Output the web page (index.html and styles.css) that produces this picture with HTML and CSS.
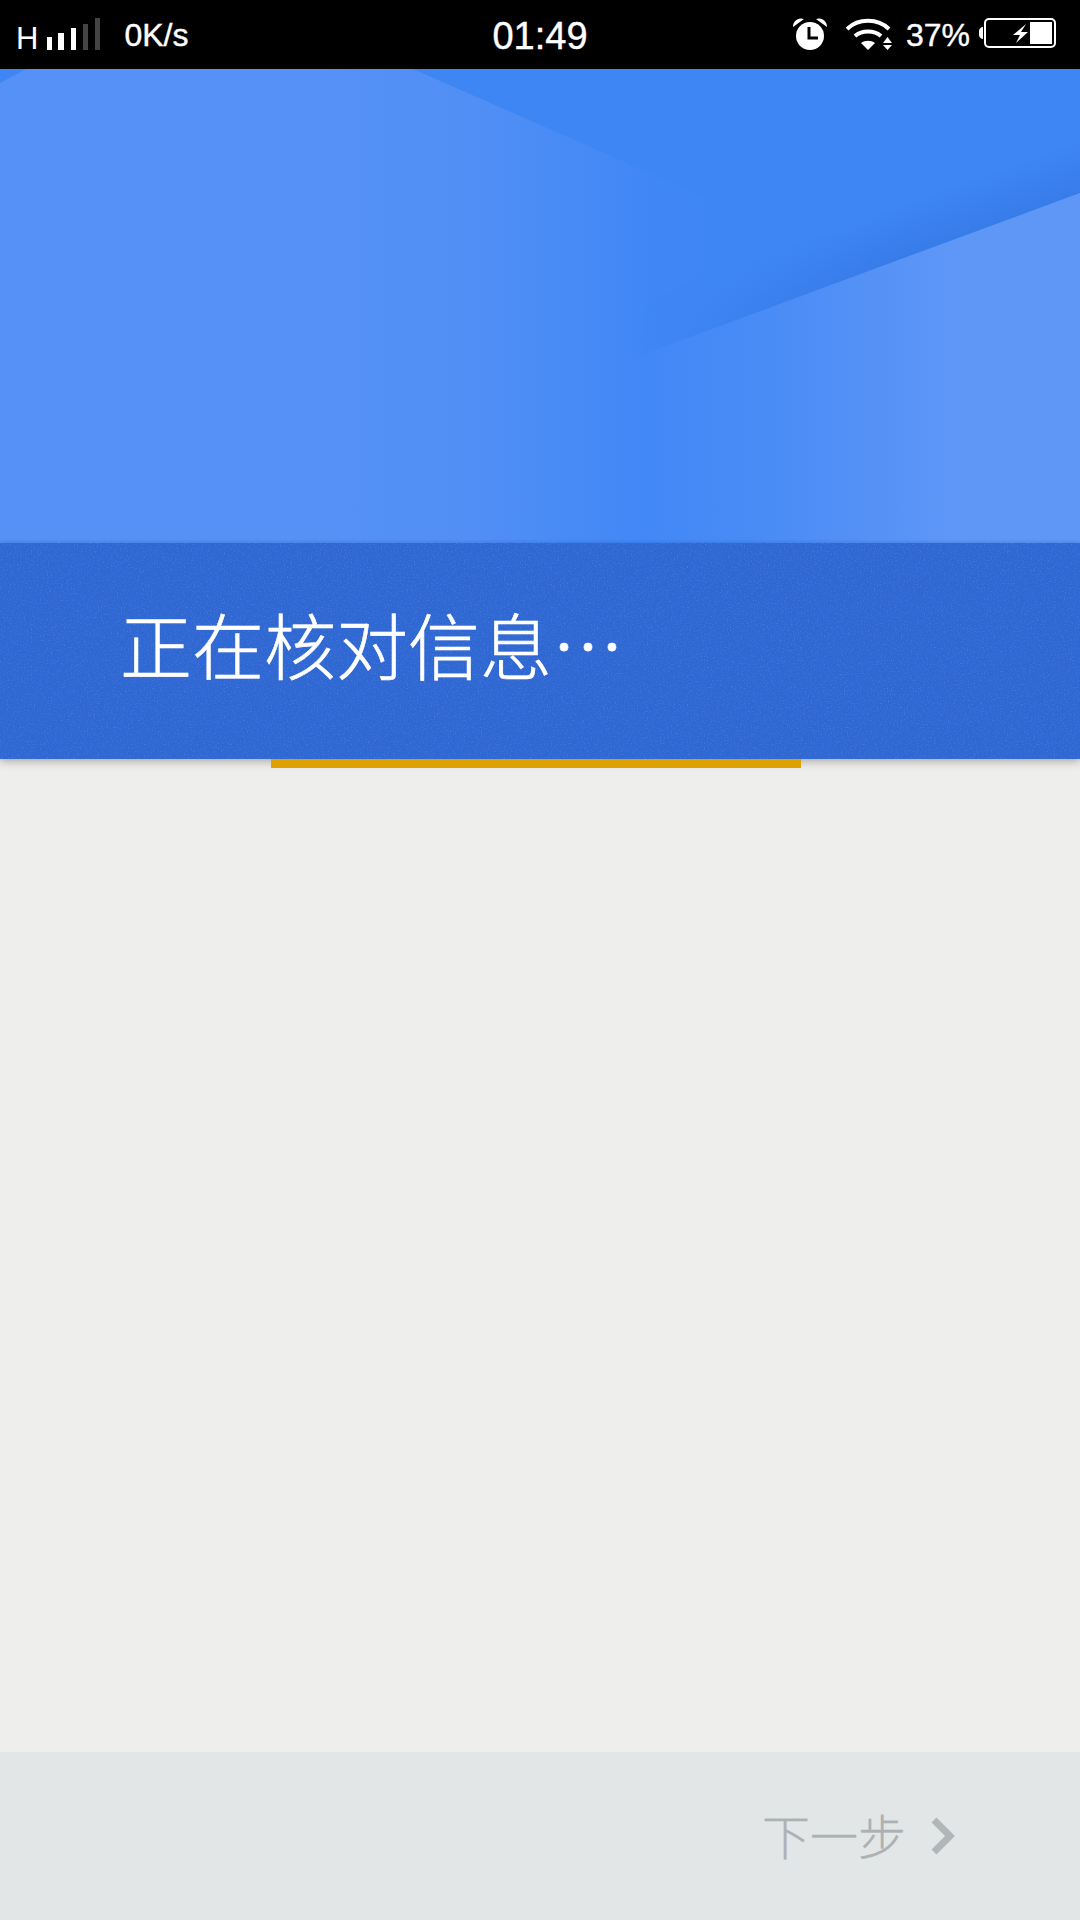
FILE: index.html
```html
<!DOCTYPE html>
<html lang="zh-CN">
  <head>
    <meta charset="utf-8">
    <meta name="viewport" content="width=device-width, initial-scale=1">
    <title>正在核对信息</title>
    <link rel="stylesheet" href="styles.css">
  </head>

  <body>
    <div class="app">
      <div class="status">
        <div class="status__left">
          <span class="status__net">H</span>
          <svg class="status__signal" width="54" height="32" viewBox="0 0 54 32">
            <rect x="0" y="19" width="5" height="13" fill="#fff"/>
            <rect x="11" y="15" width="6" height="17" fill="#fff"/>
            <rect x="24" y="10" width="5" height="22" fill="#fff"/>
            <rect x="36" y="6" width="5" height="26" fill="#444"/>
            <rect x="48" y="0" width="5" height="32" fill="#444"/>
          </svg>
          <span class="status__speed">0K/s</span>
        </div>
        <div class="status__time">01:49</div>
        <div class="status__right">
          <svg class="status__alarm" width="34" height="32" viewBox="0 0 34 32">
            <circle cx="17" cy="18" r="14" fill="#fff"/>
            <path d="M0 9 C0 3 5 -1 11 1 Z M34 9 C34 3 29 -1 23 1 Z" fill="#fff"/>
            <path d="M16 9 V20 H25" fill="none" stroke="#000" stroke-width="3"/>
          </svg>
          <svg class="status__wifi" width="46" height="32" viewBox="0 0 46 32">
            <path d="M1 11 C12 0 32 0 43 11 M9 18 C16 12 28 12 35 18" fill="none" stroke="#fff" stroke-width="4"/>
            <path d="M15 25 C19 22 25 22 29 25 L22 32 Z" fill="#fff"/>
            <path d="M41.5 19 L46 25 H37 Z M37 27 H46 L41.5 32 Z" fill="#fff"/>
          </svg>
          <span class="status__battery-text">37%</span>
          <svg class="status__battery" width="77" height="30" viewBox="0 0 77 30">
            <path d="M0 13 C0 11 2 9 4 9 V21 C2 21 0 19 0 17 Z" fill="#fff"/>
            <rect x="6" y="1" width="70" height="28" rx="4" fill="none" stroke="#fff" stroke-width="2"/>
            <rect x="51" y="4" width="22" height="22" fill="#fff"/>
            <path d="M47 6 L34 17 H41 L37 25 L49 14 H42 Z" fill="#fff"/>
          </svg>
        </div>
      </div>

      <div class="header">
        <svg class="header__art" width="1080" height="474" viewBox="0 0 1080 474">
          <defs>
            <linearGradient id="leftFade" x1="0" x2="1080" y1="0" y2="0" gradientUnits="userSpaceOnUse">
              <stop offset="0.3" stop-color="#5591f6"/>
              <stop offset="0.44" stop-color="#5591f6" stop-opacity="0.8"/>
              <stop offset="0.52" stop-color="#5591f6" stop-opacity="0.45"/>
              <stop offset="0.6" stop-color="#5591f6" stop-opacity="0.08"/>
              <stop offset="0.7" stop-color="#5591f6" stop-opacity="0"/>
            </linearGradient>
            <linearGradient id="rightFade" x1="620" x2="960" y1="0" y2="0" gradientUnits="userSpaceOnUse">
              <stop offset="0" stop-color="#5f97f7" stop-opacity="0"/>
              <stop offset="0.5" stop-color="#5f97f7" stop-opacity="0.4"/>
              <stop offset="1" stop-color="#5f97f7"/>
            </linearGradient>
            <linearGradient id="edgeShade" x1="860" y1="150" x2="882" y2="211" gradientUnits="userSpaceOnUse">
              <stop offset="0" stop-color="#2f6fd8" stop-opacity="0"/>
              <stop offset="1" stop-color="#2f6fd8" stop-opacity="0.55"/>
            </linearGradient>
            <linearGradient id="shadeFade" x1="640" x2="880" y1="0" y2="0" gradientUnits="userSpaceOnUse">
              <stop offset="0" stop-color="#000"/>
              <stop offset="1" stop-color="#fff"/>
            </linearGradient>
            <mask id="shadeMask" maskUnits="userSpaceOnUse" x="0" y="0" width="1080" height="474">
              <rect width="1080" height="474" fill="url(#shadeFade)"/>
            </mask>
          </defs>
          <rect width="1080" height="474" fill="#3f86f5"/>
          <path d="M625 292 L1080 124 V0 H413 Z" fill="url(#edgeShade)" mask="url(#shadeMask)"/>
          <path d="M0 0 H413 L870 201 V474 H0 Z" fill="url(#leftFade)"/>
          <path d="M1080 124 L560 316 V474 H1080 Z" fill="url(#rightFade)"/>
          <path d="M0 0 H26 L0 14 Z" fill="#3f86f5"/>
        </svg>
        <div class="header__band">
          <svg class="header__grain" width="1080" height="216">
            <filter id="grain">
              <feTurbulence type="fractalNoise" baseFrequency="0.7" numOctaves="2" seed="4"/>
              <feColorMatrix values="0 0 0 0 0.7  0 0 0 0 0.8  0 0 0 0 1  0 0 0 1.2 -0.62"/>
            </filter>
            <rect width="1080" height="216" filter="url(#grain)" opacity="0.35"/>
          </svg>
          <h1 class="header__title">正在核对信息…</h1>
        </div>
      </div>

      <div class="progress"><div class="progress__bar"></div></div>

      <div class="content"></div>

      <div class="footer">
        <span class="footer__next">下一步</span>
        <svg class="footer__chevron" width="24" height="38" viewBox="0 0 24 38">
          <path d="M3 3 L19 19 L3 35" fill="none" stroke="#b1b6b8" stroke-width="7"/>
        </svg>
      </div>
    </div>
  </body>
</html>
```

FILE: styles.css
```css
html, body {
  margin: 0;
  padding: 0;
}
body {
  font-family: "Liberation Sans", "Noto Sans CJK SC", sans-serif;
  background-color: #eeeeed;
}
svg {
  display: block;
}

.app {
  display: flex;
  flex-direction: column;
  width: 1080px;
  height: 1920px;
  overflow: hidden;
}

.status {
  display: grid;
  grid-template-columns: 1fr auto 1fr;
  align-items: center;
  height: 69px;
  padding: 0 24px 0 17px;
  background: #000;
  color: #fff;
}
.status__left, .status__right {
  display: flex;
  align-items: center;
}
.status__right {
  justify-content: flex-end;
}
.status__net {
  font-size: 31px;
  line-height: 32px;
  margin-top: 8px;
  margin-left: -1px;
}
.status__signal {
  margin-left: 9px;
  margin-bottom: 2px;
}
.status__speed {
  font-size: 32px;
  line-height: 32px;
  margin-left: 23px;
  margin-top: 1px;
  -webkit-text-stroke: 0.4px #fff;
}
.status__time {
  font-size: 38px;
  line-height: 44px;
  margin-left: 7px;
  margin-top: 2px;
  -webkit-text-stroke: 0.4px #fff;
}
.status__alarm {
  margin-bottom: 2px;
}
.status__wifi {
  margin-left: 19px;
  margin-bottom: 2px;
}
.status__battery-text {
  font-size: 32px;
  line-height: 32px;
  margin-left: 14px;
  margin-top: 1px;
  -webkit-text-stroke: 0.4px #fff;
}
.status__battery {
  margin-left: 9px;
  margin-bottom: 4px;
}

.header {
  position: relative;
  z-index: 1;
  box-shadow: 0 3px 8px rgba(80, 70, 40, 0.35);
}
.header__band {
  position: relative;
  display: flex;
  align-items: center;
  height: 216px;
  background: #2f67d3;
  box-shadow: 0 -1px 3px rgba(30, 70, 170, 0.25);
}
.header__grain {
  position: absolute;
  top: 0;
  left: 0;
}
.header__title {
  position: relative;
  margin: 0 0 16px 0;
  padding-left: 120px;
  font-family: "Noto Sans CJK SC", sans-serif;
  font-size: 72px;
  font-weight: 300;
  line-height: 100px;
  color: #fff;
  -webkit-text-stroke: 0.6px #fff;
}

.progress {
  position: relative;
  z-index: 2;
  height: 9px;
  padding-left: 271px;
}
.progress__bar {
  width: 530px;
  height: 9px;
  background: #dea100;
}

.content {
  flex: 1;
  background: #eeeeed;
}

.footer {
  display: flex;
  align-items: center;
  justify-content: flex-end;
  height: 168px;
  padding-right: 125px;
  background: #e2e6e7;
}
.footer__next {
  font-family: "Noto Sans CJK SC", sans-serif;
  font-size: 48px;
  font-weight: 300;
  line-height: 60px;
  color: #acb1b3;
  margin-bottom: 4px;
  -webkit-text-stroke: 0.3px #acb1b3;
}
.footer__chevron {
  margin-left: 25px;
}
```
